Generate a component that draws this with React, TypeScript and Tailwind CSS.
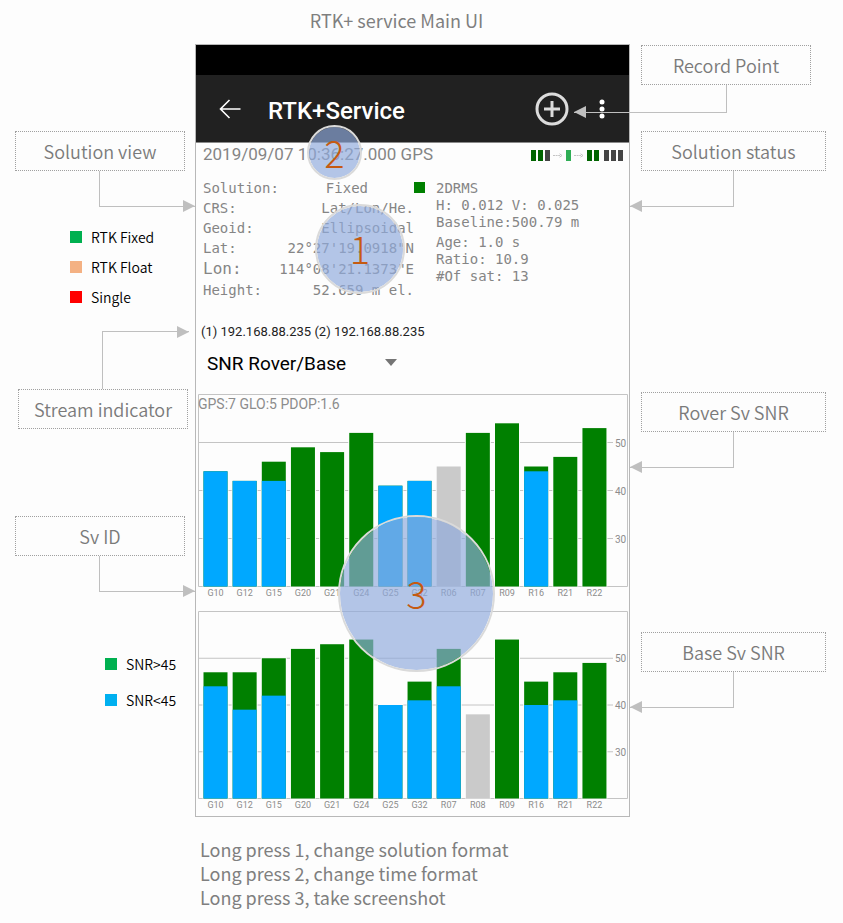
import type { ReactNode } from "react";

const LABEL_FONT = "font-['Noto_Sans_CJK_SC',sans-serif]";

type Bar = { id: string; total: number; low?: number; unused?: boolean };

const rover: Bar[] = [
  { id: "G10", total: 44, low: 44 },
  { id: "G12", total: 42, low: 42 },
  { id: "G15", total: 46, low: 42 },
  { id: "G20", total: 49 },
  { id: "G21", total: 48 },
  { id: "G24", total: 52 },
  { id: "G25", total: 41, low: 41 },
  { id: "G32", total: 42, low: 42 },
  { id: "R06", total: 45, unused: true },
  { id: "R07", total: 52 },
  { id: "R09", total: 54 },
  { id: "R16", total: 45, low: 44 },
  { id: "R21", total: 47 },
  { id: "R22", total: 53 },
];

const base: Bar[] = [
  { id: "G10", total: 47, low: 44 },
  { id: "G12", total: 47, low: 39 },
  { id: "G15", total: 50, low: 42 },
  { id: "G20", total: 52 },
  { id: "G21", total: 53 },
  { id: "G24", total: 54 },
  { id: "G25", total: 40, low: 40 },
  { id: "G32", total: 45, low: 41 },
  { id: "R07", total: 52, low: 44 },
  { id: "R08", total: 38, unused: true },
  { id: "R09", total: 54 },
  { id: "R16", total: 45, low: 40 },
  { id: "R21", total: 47, low: 41 },
  { id: "R22", total: 49 },
];

function SnrChart({ bars, plot, height, caption, name }: { bars: Bar[]; plot: number; height: number; caption?: string; name: string }) {
  const y = (snr: number) => plot + 0.5 - ((snr - 20) * plot) / 40;
  return (
    <svg viewBox={`0 0 433 ${height}`} className="block w-full" role="img" aria-label={name}>
      <g stroke="#c4c4c4" fill="none">
        <path d={`M2.5 ${plot + 0.5}V0.5H431.5V${plot + 0.5}Z`} />
        {[30, 40, 50].map((v) => (
          <path key={v} d={`M2.5 ${y(v)}H417`} />
        ))}
      </g>
      {bars.map((b, i) => {
        const x = 7.5 + i * 29.15;
        return (
          <g key={b.id}>
            <rect x={x - 1} y={y(b.total) - 1} width={26} height={y(20) - y(b.total) + 1} fill="#fdfdfd" />
            <rect x={x} y={y(b.total)} width={24} height={y(20) - y(b.total)} fill={b.unused ? "#cacaca" : "#008000"} />
            {b.low && <rect x={x} y={y(b.low)} width={24} height={y(20) - y(b.low)} fill="#00a8ff" />}
            <text x={x + 12} y={plot + 10} textAnchor="middle" className="fill-[#8c8c8c] font-['Roboto',sans-serif] text-[9px]">
              {b.id}
            </text>
          </g>
        );
      })}
      {[30, 40, 50].map((v) => (
        <text key={v} x={419} y={y(v) + 4} className="fill-[#8c8c8c] font-['Roboto',sans-serif] text-[10px]">
          {v}
        </text>
      ))}
      {caption && (
        <text x={2} y={15} className="fill-[#8c8c8c] font-['Roboto',sans-serif] text-[14px]">
          {caption}
        </text>
      )}
    </svg>
  );
}

function Callout({ children, className }: { children: ReactNode; className: string }) {
  return (
    <div className={`flex h-10 items-center justify-center border border-dotted border-[#a0a0a0] text-lg font-[350] whitespace-nowrap text-[#7a7a7a] ${className}`}>
      {children}
    </div>
  );
}

function Head({ dir, className }: { dir: "left" | "right"; className: string }) {
  return (
    <svg viewBox="0 0 12 12" className={`absolute size-3 ${className}`} aria-hidden="true">
      <path d={dir === "left" ? "M0 6L12 0V12Z" : "M12 6L0 0V12Z"} fill="#bfbfbf" />
    </svg>
  );
}

function Legend({ color, children }: { color: string; children: ReactNode }) {
  return (
    <li className="flex items-center gap-[9px] text-sm font-[350] whitespace-nowrap text-black">
      <span className={`size-3 shrink-0 ${color}`} />
      {children}
    </li>
  );
}

function Spot({ children, className }: { children: ReactNode; className: string }) {
  return (
    <div className={`absolute flex items-center justify-center rounded-full border-2 border-[#dadada] bg-[#8faadc]/68 bg-clip-padding pb-0.5 text-[38px] leading-none font-light text-[#c55a11] ${className}`}>
      {children}
    </div>
  );
}

function Cell({ color }: { color: string }) {
  return <span className={`h-[11px] w-[5px] ${color}`} />;
}

function Flow() {
  return (
    <svg viewBox="0 0 10 5" className="mx-px h-[5px] w-[10px]" fill="none" stroke="#c4c4c4" aria-hidden="true">
      <path d="M0 2.5H7" strokeDasharray="2 0.6" />
      <path d="M6.500 0.800L9 2.500L6.500 4.200" />
    </svg>
  );
}

const solution = [
  ["CRS:", "Lat/Lon/He."],
  ["Geoid:", "Ellipsoidal"],
  ["Lat:", "22°27'19.0918\"N"],
];

export default function App() {
  return (
    <main className={`grid min-h-screen grid-cols-[minmax(0,195fr)_minmax(0,435fr)_minmax(0,213fr)] bg-[#fdfdfd] ${LABEL_FONT}`}>
      <aside className="flex flex-col pt-[131px]">
        <Callout className="mr-[10px] ml-[15px]">Solution view</Callout>
        <div className="relative ml-[99px] h-9 border-b border-l border-[#bfbfbf]">
          <Head dir="right" className="right-0 -bottom-1.5" />
        </div>
        <ul className="mt-[15px] ml-[70px] grid auto-rows-[30px]">
          <Legend color="bg-[#00b050]">RTK Fixed</Legend>
          <Legend color="bg-[#f4b183]">RTK Float</Legend>
          <Legend color="bg-[#ff0000]">Single</Legend>
        </ul>
        <div className="relative mt-[19px] mr-1.5 ml-[102px] h-[58px] border-t border-l border-[#bfbfbf]">
          <Head dir="right" className="-top-1.5 right-0" />
        </div>
        <Callout className="mr-[7px] ml-[18px]">Stream indicator</Callout>
        <Callout className="mt-[87px] mr-[10px] ml-[15px]">Sv ID</Callout>
        <div className="relative ml-[99px] h-9 border-b border-l border-[#bfbfbf]">
          <Head dir="right" className="right-0 -bottom-1.5" />
        </div>
        <ul className="mt-[54px] ml-[105px] grid auto-rows-[36px]">
          <Legend color="bg-[#00b050]">SNR&gt;45</Legend>
          <Legend color="bg-[#00b0f0]">SNR&lt;45</Legend>
        </ul>
      </aside>

      <div>
        <h1 className="h-11 pr-8 text-center text-lg leading-10 font-normal text-[#7f7f7f]">RTK+ service Main UI</h1>
        <section className="relative border border-[#b8b8b8] font-['Roboto',sans-serif]">
          <div className="h-[30px] bg-black" />
          <header className="flex h-[68px] items-center border-b border-[#8a8a8a] bg-[#212121] pr-3 pl-[23px] text-white">
            <button type="button" aria-label="Back">
              <svg viewBox="0 0 22 20" className="block h-5 w-[22px]" fill="none" stroke="currentColor" strokeWidth="1.6">
                <path d="M21.500 10H1.500M10.500 1L1.500 10L10.500 19" />
              </svg>
            </button>
            <h2 className="ml-[27px] flex-1 pt-1 text-2xl font-medium">RTK+Service</h2>
            <button type="button" aria-label="Record point">
              <svg viewBox="0 0 34 34" className="block size-[34px]" fill="none" stroke="#dcdcdc" strokeWidth="3">
                <circle cx="17" cy="17" r="15" />
                <path d="M17 9V25M9 17H25" />
              </svg>
            </button>
            <button type="button" aria-label="More options" className="ml-[30px] pr-3">
              <svg viewBox="0 0 6 20" className="block h-5 w-1.5" fill="currentColor">
                <circle cx="3" cy="3" r="2.500" />
                <circle cx="3" cy="10" r="2.500" />
                <circle cx="3" cy="17" r="2.500" />
              </svg>
            </button>
          </header>

          <div className="flex h-6 items-center justify-between pr-1.5 pl-[7px]">
            <time className="text-[17px] text-[#858585]">2019/09/07 10:36:27.000 GPS</time>
            <div className="flex items-center gap-0.5">
              <Cell color="bg-[#006400]" />
              <Cell color="bg-[#006400]" />
              <Cell color="bg-[#444444]" />
              <Flow />
              <Cell color="bg-[#2fae55]" />
              <Flow />
              <Cell color="bg-[#006400]" />
              <Cell color="bg-[#006400]" />
              <span className="w-px" />
              <Cell color="bg-[#444444]" />
              <Cell color="bg-[#444444]" />
              <Cell color="bg-[#444444]" />
            </div>
          </div>

          <div className="mt-[11px] flex pl-[7px] font-['DejaVu_Sans_Mono',monospace] text-sm whitespace-pre text-[#858585]">
            <dl className="w-[211px] shrink-0 leading-5">
              <div className="flex justify-between pr-[46px]">
                <dt>Solution:</dt>
                <dd>Fixed</dd>
              </div>
              {solution.map(([k, v]) => (
                <div key={k} className="flex justify-between">
                  <dt>{k}</dt>
                  <dd>{v}</dd>
                </div>
              ))}
              <div className="flex justify-between leading-[22px]">
                <dt className="text-base leading-[22px]">Lon:</dt>
                <dd>114°08'21.1373"E</dd>
              </div>
              <div className="flex justify-between">
                <dt>Height:</dt>
                <dd>52.659 m el.</dd>
              </div>
            </dl>
            <span className="mt-1 size-[11px] shrink-0 bg-[#008000]" />
            <div className="ml-[11px] pt-0.5 leading-[17px]">
              <p>2DRMS</p>
              <p>H: 0.012 V: 0.025</p>
              <p>Baseline:500.79 m</p>
              <p className="mt-[3px]">Age: 1.0 s</p>
              <p>Ratio: 10.9</p>
              <p>#Of sat: 13</p>
            </div>
          </div>

          <p className="mt-[22px] pl-[5px] text-[13px] leading-5 text-[#222222]">(1) 192.168.88.235 (2) 192.168.88.235</p>

          <div className="relative mt-2 ml-[11px] w-[194px]">
            <select aria-label="Chart view" defaultValue="snr" className="block h-7 w-full appearance-none bg-transparent text-[19px] text-black">
              <option value="snr">SNR Rover/Base</option>
            </select>
            <svg viewBox="0 0 12 7" className="pointer-events-none absolute top-[9px] right-1 h-[7px] w-3" aria-hidden="true">
              <path d="M0 0H12L6 7Z" fill="#757575" />
            </svg>
          </div>

          <div className="mt-4 grid gap-[7px]">
            <SnrChart bars={rover} plot={192} height={210} caption="GPS:7 GLO:5 PDOP:1.6" name="Rover SNR" />
            <SnrChart bars={base} plot={187} height={205} name="Base SNR" />
          </div>

          <div className={LABEL_FONT}>
            <Spot className="top-[80px] left-[111px] size-[55px]">2</Spot>
            <Spot className="top-[159px] left-[119px] size-[90px]">1</Spot>
            <Spot className="top-[470px] left-[142px] size-[157px]">3</Spot>
          </div>
        </section>
        <div className="mt-5 pl-[5px] text-lg leading-6 text-[#7f7f7f]">
          <p>Long press 1, change solution format</p>
          <p>Long press 2, change time format</p>
          <p>Long press 3, take screenshot</p>
        </div>
      </div>

      <aside className="relative flex flex-col pt-[45px]">
        <Callout className="mr-8 ml-[11px]">Record Point</Callout>
        <div className="relative mr-[116px] -ml-14 h-7 border-r border-b border-[#bfbfbf]">
          <Head dir="left" className="-bottom-1.5 left-0" />
        </div>
        <Callout className="mt-[18px] mr-[17px] ml-[11px]">Solution status</Callout>
        <div className="relative mr-[109px] h-9 border-r border-b border-[#bfbfbf]">
          <Head dir="left" className="-bottom-1.5 left-0" />
        </div>
        <Callout className="mt-[185px] mr-[17px] ml-[11px]">Rover Sv SNR</Callout>
        <div className="relative mr-[109px] h-9 border-r border-b border-[#bfbfbf]">
          <Head dir="left" className="-bottom-1.5 left-0" />
        </div>
        <Callout className="mt-[164px] mr-[17px] ml-[11px]">Base Sv SNR</Callout>
        <div className="relative mr-[109px] h-9 border-r border-b border-[#bfbfbf]">
          <Head dir="left" className="-bottom-1.5 left-0" />
        </div>
      </aside>
    </main>
  );
}
